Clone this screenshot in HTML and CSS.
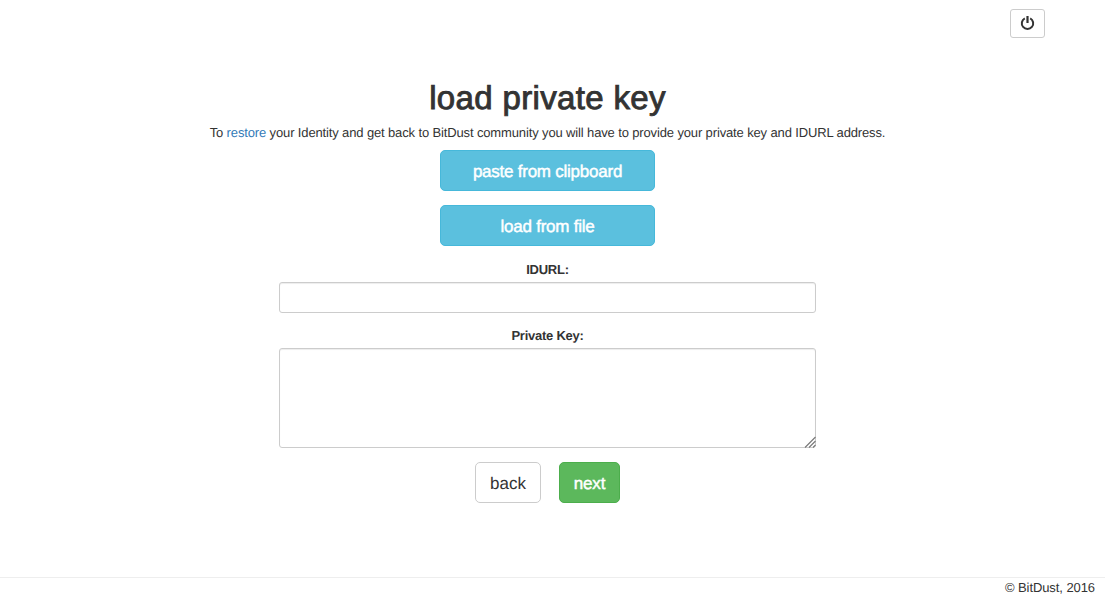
FILE: index.html
```
<!DOCTYPE html>
<html lang="en">
<head>
<meta charset="utf-8">
<title>BitDust</title>
<link rel="stylesheet" href="styles.css">
</head>
<body>
<header class="topbar">
<button class="power" aria-label="Power"><svg width="16" height="16" viewBox="0 0 16 16"><path d="M4.8 3.3A5.7 5.7 0 1 0 10.2 3.3" fill="none" stroke="#333" stroke-width="2"/><path d="M7.5 1V8" stroke="#333" stroke-width="2.2"/></svg></button>
</header>
<main class="content">
<h1 class="title">load private key</h1>
<p class="intro">To <a class="link" href="#">restore</a> your Identity and get back to BitDust community you will have to provide your private key and IDURL address.</p>
<button class="btn info">paste from clipboard</button>
<button class="btn info">load from file</button>
<label class="label" for="idurl">IDURL:</label>
<input class="field" id="idurl" type="text">
<label class="label key-label" for="key">Private Key:</label>
<div class="key-wrap"><textarea class="field key" id="key"></textarea><svg class="grip" width="12" height="12" viewBox="0 0 12 12"><path d="M1 11.5L11.5 1M5 11.5L11.5 5M9 11.5L11.5 9" fill="none" stroke="#777" stroke-width="1.1"/></svg></div>
<div class="actions"><button class="btn back">back</button><button class="btn next">next</button></div>
</main>
<footer class="footer">© BitDust, 2016</footer>
</body>
</html>
```
FILE: styles.css
```
* { box-sizing: border-box; }
body { margin: 0; height: 595px; display: flex; flex-direction: column; overflow: hidden; background: #fff; color: #333; font: 13px/18px "Liberation Sans", Arial, sans-serif; text-rendering: geometricPrecision; }
.topbar { height: 38px; padding: 9px 60px 0 0; display: flex; justify-content: flex-end; }
.power { width: 35px; height: 29px; padding: 0 0 2px; display: flex; align-items: center; justify-content: center; background: #fff; border: 1px solid #ccc; border-radius: 3px; }
.content { width: 1095px; flex: 1; padding-top: 42px; display: flex; flex-direction: column; align-items: center; }
.title { margin: 0; font-size: 33px; line-height: 36px; font-weight: 500; letter-spacing: .35px; -webkit-text-stroke: .9px #333; }
.intro { margin: 8px 0; white-space: nowrap; letter-spacing: -.135px; }
.link { color: #337ab7; text-decoration: none; }
.btn { height: 41px; padding: 2px 0 0; border: 1px solid; border-radius: 5px; font: 17px/23px "Liberation Sans", Arial, sans-serif; text-rendering: geometricPrecision; }
.info { width: 215px; margin-bottom: 14px; color: #fff; background: #5bc0de; border-color: #46b8da; letter-spacing: -.24px; -webkit-text-stroke: .45px #fff; }
.label { height: 18px; margin: 0 0 4px; padding-top: 1px; font-weight: 700; letter-spacing: -.25px; }
.key-label { margin-top: 13px; }
.field { display: block; width: 537px; height: 31px; margin: 0; padding: 5px 10px; background: #fff; border: 1px solid #ccc; border-radius: 3px; box-shadow: inset 0 1px 1px rgba(0,0,0,.075); outline: none; }
.key-wrap { position: relative; }
.key { height: 100px; resize: none; }
.grip { position: absolute; right: 0; bottom: 0; }
.actions { display: flex; gap: 18px; margin-top: 14px; }
.back { width: 66px; color: #333; background: #fff; border-color: #ccc; }
.next { width: 61px; color: #fff; background: #5cb85c; border-color: #4cae4c; letter-spacing: -.1px; -webkit-text-stroke: .45px #fff; }
.footer { height: 18px; padding: 1px 10px 0; border-top: 1px solid #eee; text-align: right; line-height: 18px; letter-spacing: -.08px; }
```
